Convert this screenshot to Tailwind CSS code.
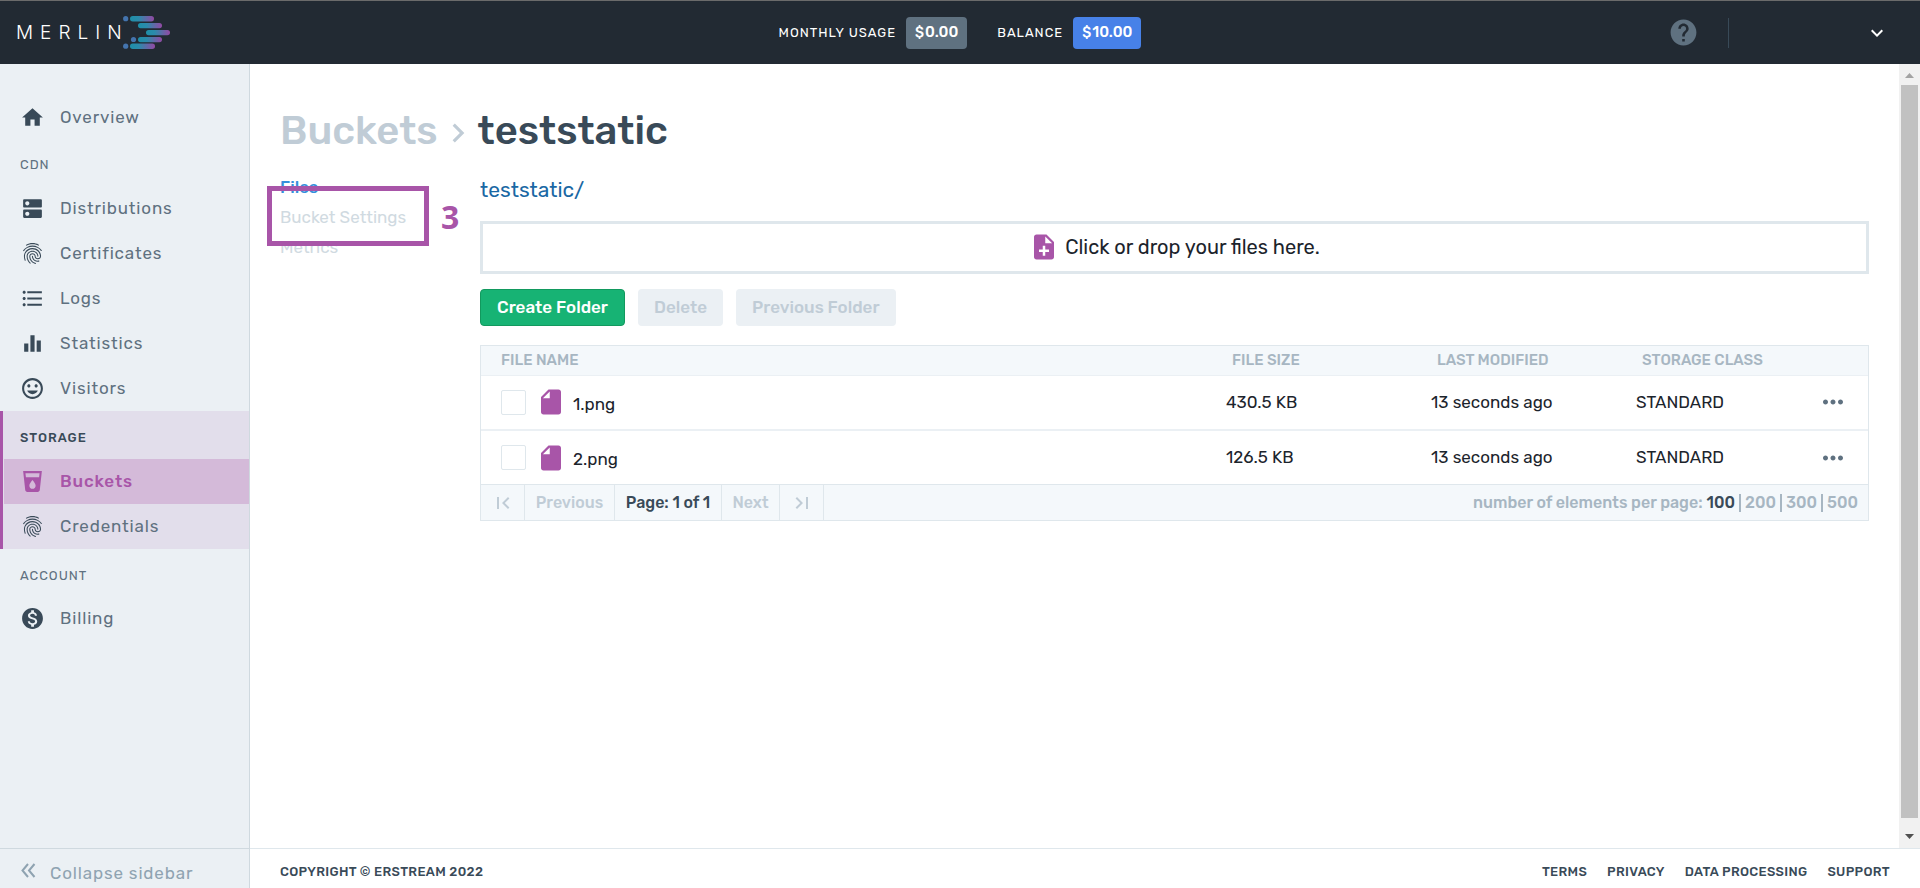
<!DOCTYPE html>
<html lang="en">
<head>
<meta charset="utf-8">
<title>Merlin – teststatic</title>
<script src="https://cdn.jsdelivr.net/npm/@tailwindcss/browser@4"></script>
</head>
<body class="flex h-screen flex-col overflow-hidden bg-white font-[Rubik,Roboto,sans-serif] text-[17px] text-[#1c242c]">
<svg class="hidden" aria-hidden="true">
  <symbol id="finger" viewBox="0 0 24 24"><path d="M17.81 4.47c-.08 0-.16-.02-.23-.06C15.66 3.42 14 3 12.01 3c-1.98 0-3.86.47-5.57 1.41-.24.13-.54.04-.68-.2-.13-.24-.04-.55.2-.68C7.82 2.52 9.86 2 12.01 2c2.13 0 3.99.47 6.03 1.52.25.13.34.43.21.67-.09.18-.26.28-.44.28zM3.5 9.72c-.1 0-.2-.03-.29-.09-.23-.16-.28-.47-.12-.7.99-1.4 2.25-2.5 3.75-3.27C9.98 4.04 14 4.03 17.15 5.65c1.5.77 2.76 1.86 3.75 3.25.16.22.11.54-.12.7-.23.16-.54.11-.7-.12-.9-1.26-2.04-2.25-3.39-2.94-2.87-1.47-6.54-1.47-9.4.01-1.36.7-2.5 1.7-3.4 2.96-.08.14-.23.21-.39.21zm6.25 12.07c-.13 0-.26-.05-.35-.15-.87-.87-1.34-1.43-2.01-2.64-.69-1.23-1.05-2.73-1.05-4.34 0-2.97 2.54-5.39 5.66-5.39s5.66 2.42 5.66 5.39c0 .28-.22.5-.5.5s-.5-.22-.5-.5c0-2.42-2.09-4.39-4.66-4.39-2.57 0-4.66 1.97-4.66 4.39 0 1.44.32 2.77.93 3.85.64 1.15 1.08 1.64 1.85 2.42.19.2.19.51 0 .71-.11.1-.24.15-.37.15zm7.17-1.85c-1.19 0-2.24-.3-3.1-.89-1.49-1.01-2.38-2.65-2.38-4.39 0-.28.22-.5.5-.5s.5.22.5.5c0 1.41.72 2.74 1.94 3.56.71.48 1.54.71 2.54.71.24 0 .64-.03 1.04-.1.27-.05.53.13.58.41.05.27-.13.53-.41.58-.57.11-1.07.12-1.21.12zM14.91 22c-.04 0-.09-.01-.13-.02-1.59-.44-2.63-1.03-3.72-2.1-1.4-1.39-2.17-3.24-2.17-5.22 0-1.62 1.38-2.94 3.08-2.94 1.7 0 3.08 1.32 3.08 2.94 0 1.07.93 1.94 2.08 1.94s2.08-.87 2.08-1.94c0-3.77-3.25-6.83-7.25-6.83-2.84 0-5.44 1.58-6.61 4.03-.39.81-.59 1.76-.59 2.8 0 .78.07 2.01.67 3.61.1.26-.03.55-.29.64-.26.1-.55-.04-.64-.29-.49-1.31-.73-2.61-.73-3.96 0-1.2.23-2.29.68-3.24 1.33-2.79 4.28-4.6 7.51-4.6 4.55 0 8.25 3.51 8.25 7.83 0 1.62-1.38 2.94-3.08 2.94s-3.08-1.32-3.08-2.94c0-1.07-.93-1.94-2.08-1.94s-2.08.87-2.08 1.94c0 1.71.66 3.31 1.87 4.51.95.94 1.86 1.46 3.27 1.85.27.07.42.35.35.61-.05.23-.26.38-.47.38z"/></symbol>
  <symbol id="file" viewBox="0 0 24 24"><path d="M10 2L4 8v12c0 1.100.9 2 2 2h12c1.100 0 2-.9 2-2V4c0-1.100-.9-2-2-2zm1 7H5.500L11 3.500z"/></symbol>
  <symbol id="dots" viewBox="0 0 24 24"><path d="M6 10c-1.100 0-2 .9-2 2s.9 2 2 2 2-.9 2-2-.9-2-2-2zm12 0c-1.100 0-2 .9-2 2s.9 2 2 2 2-.9 2-2-.9-2-2-2zm-6 0c-1.100 0-2 .9-2 2s.9 2 2 2 2-.9 2-2-.9-2-2-2z"/></symbol>
</svg>

<header class="grid h-16 shrink-0 grid-cols-[1fr_auto_1fr] items-center border-t border-[#6b6b6b] bg-[#222a33] text-white">
  <a href="#" aria-label="Merlin" class="flex items-center pl-4">
    <span class="font-[Inter] text-[19px] leading-8 tracking-[7px] font-light">MERLIN</span>
    <svg class="-ml-1.5 h-[34px] w-[48px]" viewBox="0 0 48 34">
      <defs><linearGradient id="bar" x1="0" x2="1"><stop offset="0" stop-color="#1e8fa8"/><stop offset=".35" stop-color="#2b8bab"/><stop offset="1" stop-color="#9349a4"/></linearGradient></defs>
      <g fill="url(#bar)"><rect x="7" y="0" width="24" height="5.500" rx="2.750"/><rect x="15" y="7" width="24" height="5.200" rx="2.600"/><rect x="23" y="14" width="24" height="5.200" rx="2.600"/><rect x="15" y="21" width="24" height="5.200" rx="2.600"/><rect x="7" y="27.500" width="25" height="5.500" rx="2.750"/></g>
      <g fill="#4474ae"><circle cx="2.700" cy="2.700" r="2.600"/><circle cx="10.500" cy="23.500" r="2.600"/><circle cx="2.700" cy="30.200" r="2.600"/></g>
    </svg>
  </a>
  <div class="flex items-center text-[13px] tracking-[1px]">
    <span class="mr-2.5">MONTHLY USAGE</span>
    <span class="mr-[30px] flex h-8 items-center gap-px rounded bg-[#5f7180] px-[9px] text-[15px] font-medium tracking-normal"><span class="text-[14px]">$</span>0.00</span>
    <span class="mr-2.5">BALANCE</span>
    <span class="flex h-8 items-center gap-px rounded bg-[#4781e8] px-[9px] text-[15px] font-medium tracking-normal"><span class="text-[14px]">$</span>10.00</span>
  </div>
  <div class="flex items-center justify-end pr-[31px]">
    <button aria-label="Help" class="mr-[29px]"><svg class="size-[31px] fill-[#5f7180]" viewBox="0 0 24 24"><path d="M12 2C6.480 2 2 6.480 2 12s4.480 10 10 10 10-4.480 10-10S17.520 2 12 2zm1 17h-2v-2h2v2zm2.070-7.750l-.9.920C13.450 12.900 13 13.500 13 15h-2v-.5c0-1.100.45-2.100 1.170-2.830l1.240-1.260c.37-.36.590-.86.590-1.410 0-1.100-.9-2-2-2s-2 .9-2 2H8c0-2.210 1.790-4 4-4s4 1.790 4 4c0 .88-.36 1.680-.93 2.250z"/></svg></button>
    <span class="h-[30px] w-px bg-[#394a58]"></span>
    <button aria-label="Account menu" class="ml-[136px]"><svg class="size-6 fill-white" viewBox="0 0 24 24"><path d="M16.590 8.590L12 13.170 7.410 8.590 6 10l6 6 6-6z"/></svg></button>
  </div>
</header>

<div class="flex min-h-0 flex-1">
  <nav aria-label="Main" class="w-[250px] shrink-0 border-r border-[#cfd9df] bg-[#ebf0f4] pt-[31px] tracking-wider text-[#5f7180]">
    <a href="#" class="flex h-[45px] items-center gap-[15px] pl-5"><svg class="size-[25px] fill-[#394a58]" viewBox="0 0 24 24"><path d="M10 20v-6h4v6h5v-8h3L12 3 2 12h3v8z"/></svg>Overview</a>
    <h2 class="flex h-[46px] items-center pt-1 pl-5 text-[13px] tracking-[1px]">CDN</h2>
    <a href="#" class="flex h-[45px] items-center gap-[15px] pl-5"><svg class="size-[25px] fill-[#394a58]" viewBox="0 0 24 24"><path d="M20 13H4c-.55 0-1 .45-1 1v6c0 .55.45 1 1 1h16c.55 0 1-.45 1-1v-6c0-.55-.45-1-1-1zM7 19c-1.100 0-2-.9-2-2s.9-2 2-2 2 .9 2 2-.9 2-2 2zM20 3H4c-.55 0-1 .45-1 1v6c0 .55.45 1 1 1h16c.55 0 1-.45 1-1V4c0-.55-.45-1-1-1zM7 9c-1.100 0-2-.9-2-2s.9-2 2-2 2 .9 2 2-.9 2-2 2z"/></svg>Distributions</a>
    <a href="#" class="flex h-[45px] items-center gap-[15px] pl-5"><svg class="size-[25px] fill-[#394a58]"><use href="#finger"/></svg>Certificates</a>
    <a href="#" class="flex h-[45px] items-center gap-[15px] pl-5"><svg class="size-[25px] fill-[#394a58]" viewBox="0 0 24 24"><path d="M4 10.500c-.83 0-1.500.67-1.500 1.500s.67 1.500 1.500 1.500 1.500-.67 1.500-1.500-.67-1.500-1.500-1.500zm0-6c-.83 0-1.500.67-1.500 1.500S3.170 7.500 4 7.500 5.500 6.830 5.500 6 4.830 4.500 4 4.500zm0 12c-.83 0-1.500.68-1.500 1.500s.68 1.500 1.500 1.500 1.500-.68 1.500-1.500-.67-1.500-1.500-1.500zM7 19h14v-2H7v2zm0-6h14v-2H7v2zm0-8v2h14V5H7z"/></svg>Logs</a>
    <a href="#" class="flex h-[45px] items-center gap-[15px] pl-5"><svg class="size-[25px] fill-[#394a58]" viewBox="0 0 24 24"><path d="M10 20h4V4h-4v16zm-6 0h4v-8H4v8zM16 9v11h4V9h-4z"/></svg>Statistics</a>
    <a href="#" class="flex h-[45px] items-center gap-[15px] pl-5"><svg class="size-[25px] fill-[#394a58]" viewBox="0 0 24 24"><path d="M11.990 2C6.470 2 2 6.480 2 12s4.470 10 9.990 10C17.520 22 22 17.520 22 12S17.520 2 11.990 2zM12 20c-4.420 0-8-3.580-8-8s3.580-8 8-8 8 3.580 8 8-3.580 8-8 8zm3.500-9c.83 0 1.500-.67 1.500-1.500S16.330 8 15.500 8 14 8.670 14 9.500s.67 1.500 1.500 1.500zm-7 0c.83 0 1.500-.67 1.500-1.500S9.330 8 8.500 8 7 8.670 7 9.500 7.670 11 8.500 11zm3.500 6.500c2.330 0 4.310-1.460 5.110-3.500H6.890c.8 2.040 2.780 3.500 5.110 3.500z"/></svg>Visitors</a>
    <div class="border-l-3 border-[#a855a8] bg-[#e2deeb]">
      <h2 class="flex h-12 items-center pt-1.5 pl-[17px] text-[13px] font-medium tracking-[1px] text-[#394a58]">STORAGE</h2>
      <a href="#" aria-current="page" class="ml-px flex h-[45px] items-center gap-[15px] bg-[#d4bad9] pl-4 font-medium text-[#a855a8]"><svg class="size-[25px] fill-[#a855a8]" viewBox="0 0 24 24"><path d="M3 2l2.010 18.230C5.130 21.230 5.970 22 7 22h10c1.030 0 1.870-.77 1.990-1.770L21 2H3zm9 17c-1.660 0-3-1.340-3-3 0-2 3-5.400 3-5.400s3 3.400 3 5.400c0 1.660-1.340 3-3 3zm6.330-11H5.670l-.44-4h13.550l-.45 4z"/></svg>Buckets</a>
      <a href="#" class="flex h-[45px] items-center gap-[15px] pl-[17px]"><svg class="size-[25px] fill-[#394a58]"><use href="#finger"/></svg>Credentials</a>
    </div>
    <h2 class="flex h-[47px] items-center pt-1.5 pl-5 text-[13px] tracking-[1px]">ACCOUNT</h2>
    <a href="#" class="flex h-[45px] items-center gap-[15px] pl-5"><svg class="size-[25px] fill-[#394a58]" viewBox="0 0 24 24"><path d="M12 2C6.480 2 2 6.480 2 12s4.480 10 10 10 10-4.480 10-10S17.520 2 12 2zm1.410 16.090V20h-2.670v-1.930c-1.710-.36-3.160-1.460-3.270-3.400h1.960c.1 1.050.82 1.870 2.650 1.870 1.960 0 2.400-.98 2.400-1.590 0-.83-.44-1.610-2.670-2.140-2.480-.6-4.180-1.620-4.180-3.670 0-1.720 1.390-2.840 3.110-3.210V4h2.670v1.950c1.860.45 2.790 1.860 2.850 3.390H14.300c-.05-1.110-.64-1.870-2.220-1.870-1.500 0-2.400.68-2.400 1.640 0 .84.65 1.390 2.670 1.910s4.180 1.390 4.180 3.910c-.01 1.830-1.380 2.830-3.120 3.160z"/></svg>Billing</a>
  </nav>

  <main class="min-w-0 flex-1 pt-10 pr-[30px] pl-[30px]">
    <h1 class="flex h-[53px] items-center text-[40px] font-medium text-[#394a58]">
      <a href="#" class="text-[#c0ccd6]">Buckets</a>
      <svg class="mx-px mt-1 size-[38px] fill-[#c0ccd6]" viewBox="0 0 24 24"><path d="M10 6L8.590 7.410 13.170 12l-4.580 4.590L10 18l6-6z"/></svg>
      teststatic
    </h1>
    <div class="flex pt-[15px]">
      <nav aria-label="Bucket" class="relative flex w-[200px] shrink-0 flex-col text-[#d0dae1]">
        <a href="#" class="h-[30px] leading-[30px] font-medium text-[#3490dc]">Files</a>
        <a href="#" class="h-[30px] leading-[30px]">Bucket Settings</a>
        <a href="#" class="h-[30px] leading-[30px]">Metrics</a>
        <span class="absolute top-3.5 -left-[13px] h-[60px] w-[162px] border-5 border-[#a855a8]"></span>
        <span class="absolute top-[25px] left-[161px] font-['Open_Sans'] text-[32px] leading-10 font-bold text-[#a855a8]">3</span>
      </nav>
      <section class="min-w-0 flex-1">
        <a href="#" class="block h-[49px] leading-9 text-[21px] text-[#1a68a4]">teststatic/</a>
        <button class="flex h-[53px] w-full items-center justify-center gap-1.5 border-3 border-[#dfe7ec] pb-0.5 text-[20px]"><svg class="size-[30px] fill-[#a855a8]" viewBox="0 0 24 24"><path d="M14 2H6c-1.100 0-1.990.9-1.990 2L4 20c0 1.100.89 2 1.990 2H18c1.100 0 2-.9 2-2V8l-6-6zm2 14h-3v3h-2v-3H8v-2h3v-3h2v3h3v2zm-3-7V3.500L18.500 9H13z"/></svg>Click or drop your files here.</button>
        <div class="mt-[15px] flex gap-[13px] font-medium">
          <button class="h-[37px] rounded border border-[#12995e] bg-[#17b374] px-4 text-white">Create Folder</button>
          <button disabled class="h-[37px] rounded bg-[#ebf0f4] px-4 text-[#c0ccd6]">Delete</button>
          <button disabled class="h-[37px] rounded bg-[#ebf0f4] px-4 text-[#c0ccd6]">Previous Folder</button>
        </div>
        <div class="mt-[19px] border border-[#dfe7ec]">
          <table class="w-full table-fixed text-left">
            <colgroup><col><col class="w-[205px]"><col class="w-[205px]"><col class="w-[180px]"><col class="w-[68px]"></colgroup>
            <thead class="bg-[#f4f8fb] text-[15px] text-[#a7b6c2]">
              <tr class="h-[29px] border-b border-[#ebf0f4]">
                <th class="pl-5 font-medium">FILE NAME</th><th class="pl-[22px] font-medium">FILE SIZE</th><th class="pl-[22px] font-medium">LAST MODIFIED</th><th class="pl-[22px] font-medium">STORAGE CLASS</th><th aria-label="Actions"></th>
              </tr>
            </thead>
            <tbody>
              <tr class="h-[55px] border-b-2 border-[#ebf0f4]">
                <td><div class="flex items-center pl-5"><input id="f1" type="checkbox" class="size-[25px] appearance-none rounded-xs border border-[#dfe7ec]"><svg class="ml-2.5 size-[30px] fill-[#a855a8]"><use href="#file"/></svg><label for="f1" class="pt-1 pl-[7px]">1.png</label></div></td>
                <td class="pl-4">430.5 KB</td><td class="pl-4">13 seconds ago</td><td class="pl-4">STANDARD</td>
                <td><button aria-label="Actions for 1.png" class="ml-[18px] block"><svg class="size-[30px] fill-[#5f7180]"><use href="#dots"/></svg></button></td>
              </tr>
              <tr class="h-[54px]">
                <td><div class="flex items-center pl-5"><input id="f2" type="checkbox" class="size-[25px] appearance-none rounded-xs border border-[#dfe7ec]"><svg class="ml-2.5 size-[30px] fill-[#a855a8]"><use href="#file"/></svg><label for="f2" class="pt-1 pl-[7px]">2.png</label></div></td>
                <td class="pl-4">126.5 KB</td><td class="pl-4">13 seconds ago</td><td class="pl-4">STANDARD</td>
                <td><button aria-label="Actions for 2.png" class="ml-[18px] block"><svg class="size-[30px] fill-[#5f7180]"><use href="#dots"/></svg></button></td>
              </tr>
            </tbody>
          </table>
          <div class="flex h-9 items-stretch border-t border-[#dfe7ec] bg-[#f4f8fb] text-base font-medium text-[#c0ccd6]">
            <button disabled aria-label="First page" class="flex w-11 items-center justify-center border-r border-[#dfe7ec]"><svg class="size-6 fill-[#c0ccd6]" viewBox="0 0 24 24"><path d="M18.410 16.590L13.820 12l4.590-4.590L17 6l-6 6 6 6zM6 6h2v12H6z"/></svg></button>
            <button disabled class="w-[90px] border-r border-[#dfe7ec]">Previous</button>
            <span class="flex w-[107px] items-center justify-center border-r border-[#dfe7ec] text-[#394a58]">Page: 1 of 1</span>
            <button disabled class="w-[58px] border-r border-[#dfe7ec]">Next</button>
            <button disabled aria-label="Last page" class="flex w-11 items-center justify-center border-r border-[#dfe7ec]"><svg class="size-6 fill-[#c0ccd6]" viewBox="0 0 24 24"><path d="M5.590 7.410L10.180 12l-4.590 4.590L7 18l6-6-6-6zM16 6h2v12h-2z"/></svg></button>
            <div class="ml-auto flex items-center gap-1 pr-2.5 text-[#a7b6c2]">number of elements per page: <a href="#" class="text-[#394a58]">100</a><span class="h-[18px] w-0.5 bg-[#a7b6c2]"></span><a href="#">200</a><span class="h-[18px] w-0.5 bg-[#a7b6c2]"></span><a href="#">300</a><span class="h-[18px] w-0.5 bg-[#a7b6c2]"></span><a href="#">500</a></div>
          </div>
        </div>
      </section>
    </div>
  </main>

  <div aria-hidden="true" class="flex w-[21px] shrink-0 flex-col items-center bg-[#f1f1f1]">
    <svg class="h-[21px] w-[9px] shrink-0 fill-[#a3a3a3]" viewBox="0 0 9 21"><path d="M0 14l4.500-5 4.500 5z"/></svg>
    <div class="w-[17px] flex-1 bg-[#c1c1c1]"></div>
    <svg class="h-[30px] w-[9px] shrink-0 fill-[#505050]" viewBox="0 0 9 30"><path d="M0 16l4.500 5 4.500-5z"/></svg>
  </div>
</div>

<footer class="flex h-10 shrink-0 text-[13px] font-medium tracking-wide text-[#394a58]">
  <button class="flex w-[250px] items-center gap-3.5 border-t border-r border-[#cfd9df] bg-[#ebf0f4] pt-2.5 pl-[21px] text-[17px] font-normal tracking-wider text-[#8fa3b1]"><svg class="mb-1.5 size-[15px] fill-none stroke-[#8fa3b1] stroke-2" viewBox="0 0 15 15"><path d="M7 1L1.500 7.500 7 14M13.500 1L8 7.500 13.500 14"/></svg>Collapse sidebar</button>
  <div class="flex flex-1 items-center justify-between border-t border-[#dfe7ec] pt-1.5 pr-[30px] pl-[30px]">
    <span>COPYRIGHT © ERSTREAM 2022</span>
    <div class="flex gap-5"><a href="#">TERMS</a><a href="#">PRIVACY</a><a href="#">DATA PROCESSING</a><a href="#">SUPPORT</a></div>
  </div>
</footer>
</body>
</html>
